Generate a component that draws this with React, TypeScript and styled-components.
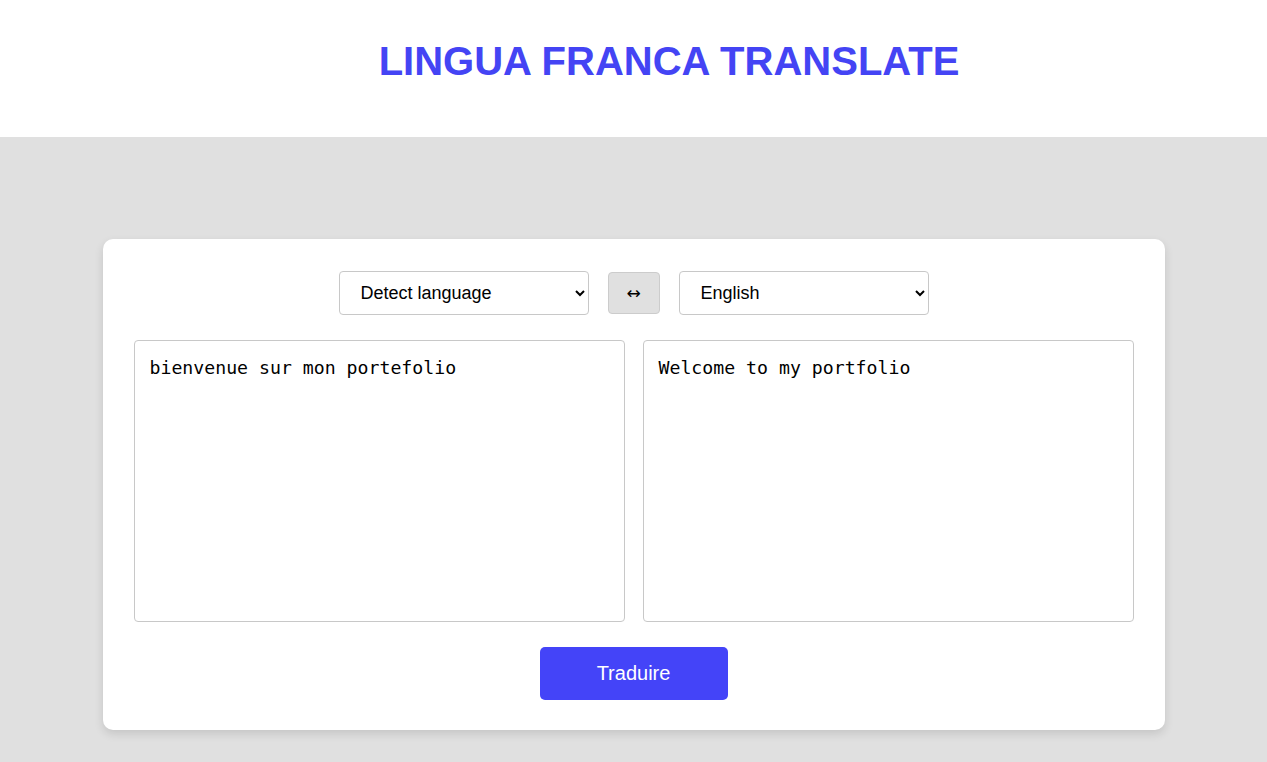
import React, { useState } from "react";
import styled, { createGlobalStyle } from "styled-components";

const GlobalStyle = createGlobalStyle`
  html, body { margin: 0; padding: 0; }
  body { font-family: "Liberation Sans", Arial, sans-serif; background: #e0e0e0; }
  * { box-sizing: border-box; }
`;

const Header = styled.header`
  height: 137px;
  background: #ffffff;
  display: flex;
  align-items: center;
  justify-content: center;
  padding-left: 71px;
`;

const Title = styled.h1`
  margin: 0;
  padding-bottom: 15px;
  font-family: "Liberation Sans", Arial, sans-serif;
  font-weight: 700;
  font-size: 40px;
  color: #4444f4;
  letter-spacing: 0;
`;

const Main = styled.main`
  background: #e0e0e0;
  padding: 102px 0 32px;
  display: flex;
  justify-content: center;
`;

const Card = styled.section`
  width: 1062px;
  background: #ffffff;
  border-radius: 10px;
  box-shadow: 0 4px 10px rgba(0, 0, 0, 0.12);
  padding: 32px 31px 30px;
  display: flex;
  flex-direction: column;
  align-items: center;
  gap: 25px;
`;

const Controls = styled.div`
  display: flex;
  align-items: center;
  justify-content: center;
  gap: 19px;
  height: 44px;
`;

const Select = styled.select`
  width: 250px;
  height: 44px;
  border: 1px solid #c8c8c8;
  border-radius: 4px;
  background: #ffffff;
  padding: 0 14px 0 17px;
  font-family: "Liberation Sans", Arial, sans-serif;
  font-size: 18px;
  color: #000;
`;

const SwapButton = styled.button`
  width: 52px;
  height: 42px;
  border: 1px solid #cccccc;
  border-radius: 4px;
  background: #e0e0e0;
  font-family: "DejaVu Sans", sans-serif;
  font-size: 17px;
  color: #000;
  padding: 0;
  cursor: pointer;
`;

const Panes = styled.div`
  width: 1000px;
  display: grid;
  grid-template-columns: 1fr 1fr;
  gap: 18px;
`;

const TextBox = styled.textarea`
  height: 282px;
  width: 100%;
  resize: none;
  border: 1px solid #c8c8c8;
  border-radius: 4px;
  padding: 14px 15px;
  font-family: "DejaVu Sans Mono", "Liberation Mono", monospace;
  font-size: 18.2px;
  line-height: 26px;
  color: #000;
  background: #fff;
  outline: none;
`;

const TranslateButton = styled.button`
  width: 188px;
  height: 53px;
  border: none;
  border-radius: 5px;
  background: #4444f8;
  color: #ffffff;
  font-family: "Liberation Sans", Arial, sans-serif;
  font-size: 20px;
  cursor: pointer;
`;

export default function App() {
  const [source, setSource] = useState("bienvenue sur mon portefolio");
  const [target, setTarget] = useState("Welcome to my portfolio");
  const [from, setFrom] = useState("auto");
  const [to, setTo] = useState("en");

  return (
    <>
      <GlobalStyle />
      <Header>
        <Title>LINGUA FRANCA TRANSLATE</Title>
      </Header>
      <Main>
        <Card>
          <Controls>
            <Select value={from} onChange={(e) => setFrom(e.target.value)}>
              <option value="auto">Detect language</option>
              <option value="fr">French</option>
              <option value="en">English</option>
            </Select>
            <SwapButton type="button">↔</SwapButton>
            <Select value={to} onChange={(e) => setTo(e.target.value)}>
              <option value="en">English</option>
              <option value="fr">French</option>
            </Select>
          </Controls>
          <Panes>
            <TextBox value={source} onChange={(e) => setSource(e.target.value)} />
            <TextBox value={target} onChange={(e) => setTarget(e.target.value)} spellCheck={false} />
          </Panes>
          <TranslateButton type="button">Traduire</TranslateButton>
        </Card>
      </Main>
    </>
  );
}
